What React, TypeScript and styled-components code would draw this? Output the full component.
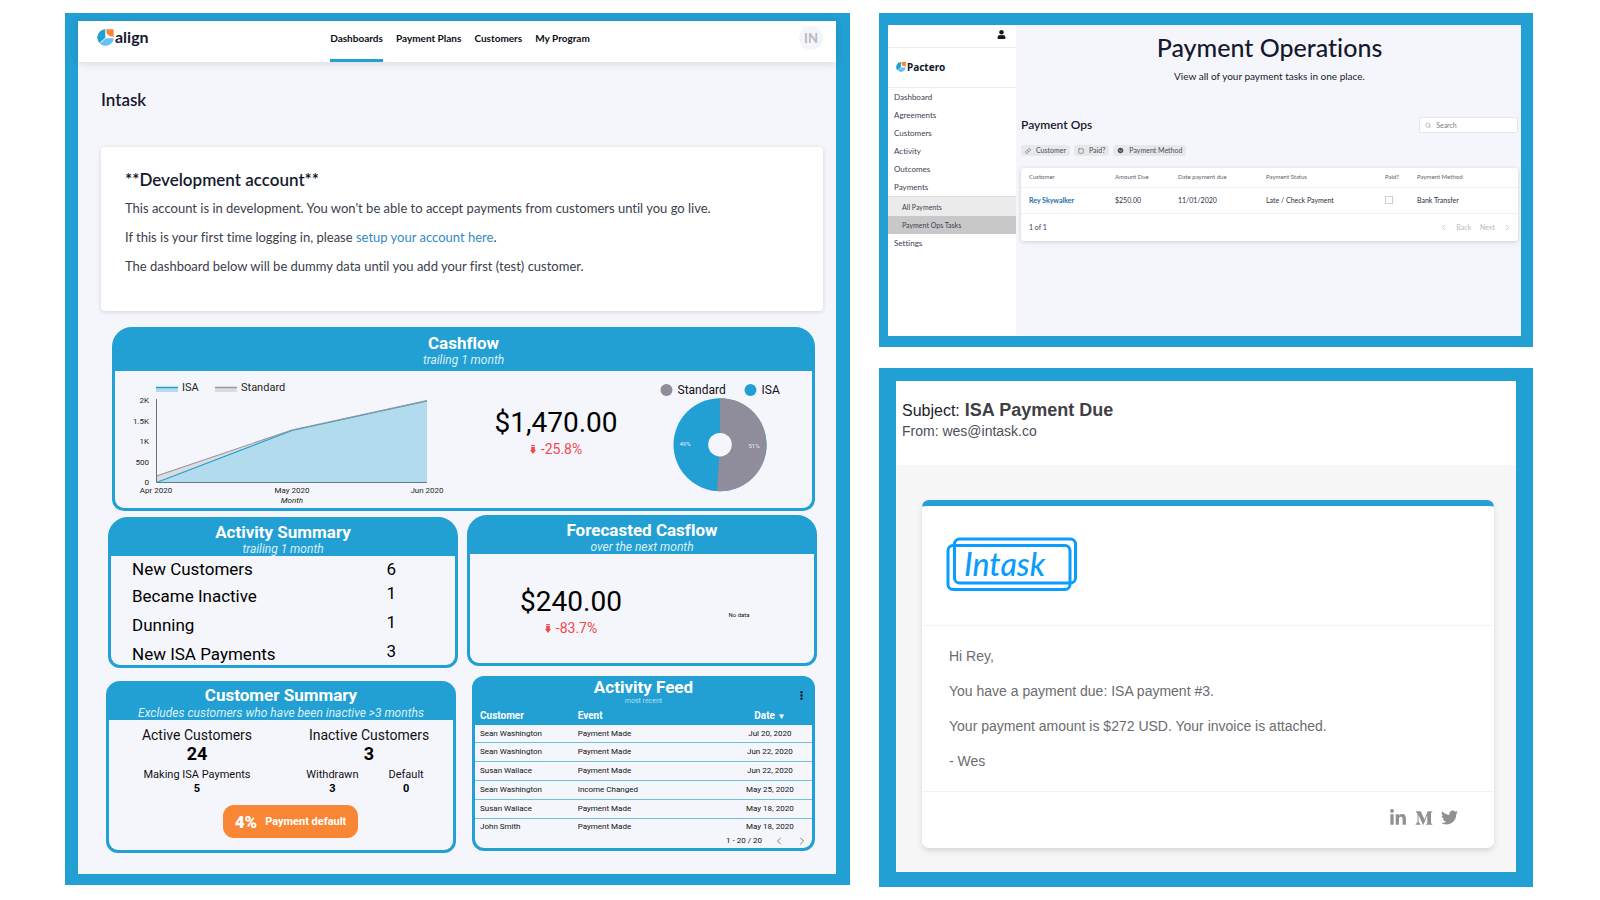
import React from 'react';
import styled, { createGlobalStyle, css } from 'styled-components';
import { FaLinkedinIn, FaMediumM, FaTwitter, FaUser } from 'react-icons/fa';
import { FiChevronLeft, FiChevronRight, FiLink, FiSearch, FiSquare } from 'react-icons/fi';
import { IoIosArrowDropdownCircle } from 'react-icons/io';

const blue = '#229fd3';
const ink = '#15192d';
const mist = '#f5f6fb';
const lato = '"Lato", "Liberation Sans", sans-serif';
const roboto = '"Roboto", "Liberation Sans", sans-serif';
const arial = '"Liberation Sans", Arial, sans-serif';

const GlobalStyle = createGlobalStyle`
  *, *::before, *::after { box-sizing: border-box; }
  body { margin: 0; background: #fff; color: ${ink}; font-family: ${lato}; font-variant-ligatures: none; }
  h1, h2, h3, p, ul, dl, dt, dd { margin: 0; padding: 0; }
  ul { list-style: none; }
  a { color: inherit; text-decoration: none; }
  button { margin: 0; padding: 0; border: 0; background: none; color: inherit; font: inherit; cursor: pointer; }
  svg { display: block; }
`;

const Page = styled.div`
  display: grid;
  grid-template-columns: 785fr 654fr;
  gap: 29px;
  align-items: start;
  padding: 13px 67px 13px 65px;
`;

const SideStack = styled.div`
  display: flex;
  flex-direction: column;
  gap: 21px;
`;

const Frame = styled.section<{ $edges: string }>`
  border: 0 solid ${blue};
  border-width: ${(p) => p.$edges};
`;

/* ---------- program dashboard ---------- */

const DashFrame = styled(Frame)`
  background: ${mist};
`;

const TopBar = styled.header`
  display: grid;
  grid-template-columns: 1fr auto 1fr;
  align-items: stretch;
  height: 41px;
  padding: 0 13px 0 19px;
  background: #fff;
  box-shadow: 0 1px 8px rgba(30, 35, 60, 0.14);
`;

const Brand = styled.a`
  display: flex;
  align-items: center;
  gap: 1px;
  padding-bottom: 9px;
  font-size: 16px;
  line-height: 20px;
  font-weight: 700;
`;

const Nav = styled.nav`
  display: flex;
  gap: 13px;
`;

const NavLink = styled.a<{ $active?: boolean }>`
  padding-top: 10px;
  border-bottom: 3px solid ${(p) => (p.$active ? blue : 'transparent')};
  color: #0c0d14;
  font-size: 10px;
  line-height: 14px;
  font-weight: 700;
`;

const Avatar = styled.button`
  justify-self: end;
  width: 24px;
  height: 24px;
  margin-top: 5px;
  border-radius: 50%;
  background: #f4f5fa;
  color: #b9babd;
  font-size: 13px;
  line-height: 24px;
  font-weight: 700;
  text-align: center;
`;

const Intro = styled.div`
  padding: 26px 13px 0 23px;
`;

const PageName = styled.h1`
  margin-bottom: 35px;
  font-size: 17px;
  line-height: 24px;
  font-weight: 600;
`;

const Notice = styled.div`
  padding: 21px 24px 35px;
  border-radius: 4px;
  background: #fff;
  box-shadow: 0 1px 4px rgba(30, 35, 60, 0.16);
`;

const NoticeTitle = styled.h2`
  margin-bottom: 6px;
  font-size: 17px;
  line-height: 24px;
  font-weight: 600;
`;

const NoticeText = styled.p`
  color: #3b3e4d;
  font-size: 13px;
  line-height: 20px;
  & + & { margin-top: 9px; }
  a { color: #3489c2; }
`;

const WidgetRow = styled.div<{ $cols: string; $gap: number; $pad: string }>`
  display: grid;
  grid-template-columns: ${(p) => p.$cols};
  gap: ${(p) => p.$gap}px;
  padding: ${(p) => p.$pad};
`;

/* The blue ground runs under the rounded border; each body paints its own light surface. */
const Widget = styled.article<{ $corner?: number; $low?: boolean }>`
  align-self: ${(p) => (p.$low ? 'end' : 'start')};
  overflow: hidden;
  border: 3px solid ${blue};
  border-radius: ${(p) => p.$corner ?? 20}px ${(p) => p.$corner ?? 20}px 12px 12px;
  background: ${blue};
  font-family: ${roboto};
  color: #101114;
`;

const WidgetHead = styled.header<{ $tall?: boolean; $tight?: boolean }>`
  display: flex;
  flex-direction: column;
  gap: ${(p) => (p.$tight ? 2 : 1)}px;
  padding: ${(p) => (p.$tall ? '3px 0 4px' : p.$tight ? '1px 0 0' : '2px 0 0')};
  color: #fff;
  text-align: center;
`;

const WidgetTitle = styled.h3`
  font-size: 17px;
  line-height: 20px;
  font-weight: 700;
`;

const WidgetNote = styled.p`
  color: #dcf0f9;
  font-size: 12px;
  line-height: 13px;
  font-style: italic;
`;

const CashBody = styled.div`
  display: grid;
  grid-template-columns: 345fr 192fr 160fr;
  height: 137px;
  background: ${mist};
`;

const Stat = styled.div<{ $top: number }>`
  display: flex;
  flex-direction: column;
  align-items: center;
  gap: 1px;
  padding-top: ${(p) => p.$top}px;
`;

const StatValue = styled.strong`
  color: #000;
  font-size: 28px;
  line-height: 32px;
  font-weight: 400;
`;

const StatDelta = styled.span`
  display: flex;
  align-items: center;
  gap: 5px;
  color: #f2484b;
  font-size: 14px;
  line-height: 18px;
`;

const ForecastBody = styled.div`
  display: grid;
  grid-template-columns: 202fr 134fr;
  height: 109px;
  padding-right: 8px;
  background: ${mist};
`;

const NoData = styled.p`
  padding-top: 56px;
  font-size: 6px;
  line-height: 10px;
  text-align: center;
`;

const SummaryList = styled.dl`
  height: 109px;
  padding: 0 59px 0 21px;
  background: ${mist};
  color: #000;
  font-size: 17px;
  line-height: 20px;
`;

const SummaryItem = styled.div`
  display: flex;
  justify-content: space-between;
  height: 29px;
  dt { padding-top: 4px; }
  dd { padding-top: 1px; }
  &:first-child { height: 26px; }
  &:first-child dt, &:first-child dd { padding-top: 3px; }
  &:last-child { height: 24px; }
`;

const CustomerBody = styled.div`
  padding: 6px 0 12px;
  background: ${mist};
`;

const CountGrid = styled.div`
  display: grid;
  grid-template-columns: 176fr 168fr;
`;

const CountGroup = styled.div`
  display: flex;
  flex-direction: column;
  align-items: center;
  gap: 4px;
`;

const Counts = styled.div`
  display: flex;
  gap: 30px;
  padding-right: 8px;
`;

const Count = styled.dl<{ $big?: boolean }>`
  text-align: center;
  dt {
    font-size: ${(p) => (p.$big ? 14 : 11)}px;
    line-height: ${(p) => (p.$big ? 18 : 14)}px;
  }
  dd {
    color: #000;
    font-size: ${(p) => (p.$big ? 18 : 11)}px;
    line-height: ${(p) => (p.$big ? 20 : 14)}px;
    font-weight: 700;
  }
`;

const DefaultRate = styled.p`
  display: flex;
  align-items: center;
  justify-content: center;
  gap: 8px;
  width: 135px;
  height: 33px;
  margin: 9px 0 0 114px;
  border-radius: 11px;
  background: #f98634;
  color: #fff;
  font-size: 11px;
  font-weight: 700;
  strong { font-size: 17px; }
`;

const FeedHead = styled.header`
  display: grid;
  grid-template-columns: 1fr auto 1fr;
  align-items: start;
  height: 28px;
  color: #fff;
  text-align: center;
`;

const FeedTitle = styled(WidgetTitle)`
  grid-column: 2;
  line-height: 16px;
`;

const FeedNote = styled.p`
  grid-column: 2;
  color: #b5dff1;
  font-size: 7px;
  line-height: 10px;
`;

const MenuButton = styled.button`
  grid-column: 3;
  grid-row: 1 / span 2;
  justify-self: end;
  padding: 12px 9px 0 0;
  color: #0c1b3a;
`;

const FeedTable = styled.table`
  width: 100%;
  height: 129px;
  border-collapse: collapse;
  table-layout: fixed;
  font-size: 8px;
  line-height: 10px;
  th {
    height: 18px;
    padding: 0 5px;
    color: #fff;
    font-size: 10px;
    font-weight: 700;
    text-align: left;
  }
  td { padding: 0 5px; border-bottom: 1px solid #6fbfe1; background: ${mist}; }
  tr:last-child td { border-bottom: 0; }
  th:last-child, td:last-child { text-align: center; }
`;

const SortMark = styled.span`
  font-size: 8px;
`;

const Pager = styled.div`
  display: flex;
  justify-content: flex-end;
  align-items: center;
  height: 12px;
  padding: 0 4px 3px 0;
  gap: 11px;
  background: ${mist};
  font-size: 8px;
  line-height: 8px;
  button { color: #7e8084; }
`;

/* Keeps two pixels of room under the right-hand widget so its neighbour hangs lower. */
const WidgetSpacer = styled.div`
  min-width: 0;
  padding-bottom: 2px;
`;

/* ---------- payment operations ---------- */

const OpsFrame = styled(Frame)`
  display: grid;
  grid-template-columns: 128fr 505fr;
  background: ${mist};
`;

const Sidebar = styled.aside`
  background: #fff;
  color: #3d4050;
`;

const UserBar = styled.div`
  display: flex;
  justify-content: flex-end;
  height: 23px;
  padding: 5px 10px 0 0;
  border-bottom: 1px solid #ececef;
  color: #17181c;
`;

const PacteroBrand = styled.a`
  display: flex;
  align-items: center;
  gap: 1px;
  height: 40px;
  padding: 0 0 2px 8px;
  border-bottom: 1px solid #ececef;
  color: ${ink};
  font: 700 10px/14px "Noto Sans", "Open Sans", sans-serif;
`;

const menuItem = css`
  display: block;
  height: 18px;
  padding-left: 6px;
  font-size: 8px;
  line-height: 18px;
`;

const MenuLink = styled.a`
  ${menuItem}
`;

const SubMenu = styled.ul`
  padding-top: 1px;
  border-top: 1px solid #dfe0e2;
  background: #ebebec;
`;

const SubLink = styled.a<{ $current?: boolean }>`
  ${menuItem}
  padding-left: 14px;
  font-size: 7px;
  background: ${(p) => (p.$current ? '#c8c8c9' : 'transparent')};
`;

const OpsMain = styled.main`
  padding: 6px 3px 95px 5px;
`;

const OpsTitle = styled.h1`
  font-size: 25px;
  line-height: 32px;
  font-weight: 500;
  text-align: center;
`;

const OpsLead = styled.p`
  margin: 6px 0 34px;
  font-size: 10px;
  line-height: 14px;
  text-align: center;
`;

const Toolbar = styled.div`
  display: flex;
  align-items: center;
  justify-content: space-between;
`;

const OpsHeading = styled.h2`
  font-size: 12px;
  line-height: 16px;
  font-weight: 600;
`;

const SearchBox = styled.label`
  display: flex;
  align-items: center;
  gap: 5px;
  width: 99px;
  height: 16px;
  padding-left: 5px;
  border: 1px solid #e6e7eb;
  border-radius: 2px;
  background: #fff;
  color: #85878f;
  input {
    width: 100%;
    min-width: 0;
    padding: 0;
    border: 0;
    outline: 0;
    background: transparent;
    color: inherit;
    font: 7px/10px ${lato};
  }
  input::placeholder { color: #7b7d86; opacity: 1; }
`;

const Filters = styled.div`
  display: flex;
  gap: 4px;
  margin: 12px 0;
`;

const Chip = styled.button`
  display: flex;
  align-items: center;
  gap: 5px;
  height: 11px;
  padding: 0 4px;
  border-radius: 3px;
  background: #e7e8ea;
  color: #4b4d57;
  font-size: 7px;
  line-height: 11px;
`;

const TableCard = styled.div`
  border-radius: 3px;
  background: #fff;
  box-shadow: 0 1px 4px rgba(30, 35, 60, 0.18);
`;

const OpsTable = styled.table`
  width: 100%;
  border-collapse: collapse;
  table-layout: fixed;
  line-height: 10px;
  th, td { padding: 0 0 1px 8px; text-align: left; border-bottom: 1px solid #eeeff3; white-space: nowrap; }
  th { height: 19px; color: #5b5e6a; font-size: 6px; font-weight: 400; }
  td { height: 26px; color: #2b2e3c; font-size: 7px; }
  a { color: #1c6fae; font-weight: 700; }
  input {
    display: block;
    appearance: none;
    width: 8px;
    height: 8px;
    margin: 0;
    border: 1px solid #cccdd2;
    background: #fff;
  }
`;

const TableFoot = styled.div`
  display: flex;
  align-items: center;
  gap: 9px;
  height: 27px;
  padding: 0 6px 0 8px;
  color: #b9bac0;
  font-size: 7px;
  span { margin-right: auto; color: #3d4050; }
  button { display: flex; align-items: center; gap: 8px; }
`;

/* ---------- e-mail ---------- */

const MailFrame = styled(Frame)`
  background: #fff;
  font-family: ${arial};
`;

const MailHead = styled.header`
  height: 84px;
  padding: 18px 6px 0;
  color: #222327;
  p { color: #4d5058; font-size: 14px; line-height: 18px; }
`;

const Subject = styled.h2`
  display: flex;
  align-items: baseline;
  gap: 5px;
  font-size: 16px;
  line-height: 22px;
  font-weight: 400;
  strong { color: #3f4044; font-size: 18px; }
`;

const MailBody = styled.div`
  padding: 35px 22px 24px 26px;
  background: #f7f7f7;
`;

const MailCard = styled.article`
  border-top: 6px solid ${blue};
  border-radius: 7px;
  background: #fff;
  box-shadow: 0 3px 6px rgba(0, 0, 0, 0.13);
`;

const MailLogo = styled.div`
  height: 120px;
  padding: 31px 24px 0;
  border-bottom: 1px solid #f3f3f4;
`;

const MailText = styled.div`
  padding: 21px 27px;
  border-bottom: 1px solid #f3f3f4;
  color: #6b6c6f;
  font-size: 14px;
  line-height: 18px;
  p + p { margin-top: 17px; }
`;

const MailFoot = styled.footer`
  display: flex;
  align-items: center;
  justify-content: flex-end;
  gap: 8px;
  height: 56px;
  padding: 0 36px 4px 0;
  color: #8e9092;
`;

/* ---------- drawings ---------- */

function Mark({ size }: { size: number }) {
  return (
    <svg width={size} height={size} viewBox="0 0 17 17" aria-hidden="true">
      <path d="M8.3 .2A8.4 8.4 0 0 0 2.3 13.9L8.3 8.8Z" fill="#1f9fd2" />
      <path d="M9.2 .2H16.7V7.8Q12.5 7.6 10.7 5.8Q9.3 4 9.2 .2Z" fill="#f98634" />
      <path d="M2.9 14.5L9 9.3H16.7A8.2 8.2 0 0 1 2.9 14.5Z" fill="#66bff7" />
    </svg>
  );
}

function DownArrow() {
  return (
    <svg width="6" height="9" viewBox="0 0 6 9" aria-hidden="true">
      <path d="M1.2 0H4.8V1H1.2ZM1.2 1.7H4.8V5H6L3 9L0 5H1.2Z" fill="#f2484b" />
    </svg>
  );
}

function CashChart() {
  return (
    <svg width="345" height="137" viewBox="0 0 345 137" fontFamily="Roboto, sans-serif" fill="#1d1e22">
      <rect x="41" y="16" width="22" height="5" fill="#b2dbee" />
      <path d="M41 16.5H63" stroke={blue} strokeWidth="1.4" />
      <text x="67" y="20" fontSize="11">ISA</text>
      <rect x="100" y="16" width="22" height="5" fill="#dcdcde" />
      <path d="M100 16.5H122" stroke="#9a9a9e" strokeWidth="1.4" />
      <text x="126" y="20" fontSize="11">Standard</text>
      <path d="M41.5 105L177 59V59.5L41.5 111.5Z" fill="#dcdcde" />
      <path d="M41.5 111.5L177 59.5L312 30V111.5Z" fill="#b2dbee" />
      <path d="M41.5 111.5L177 59.5L312 30" fill="none" stroke={blue} strokeWidth="1.2" />
      <path d="M41.5 105L177 59L312 29.6" fill="none" stroke="#94949e" strokeWidth="1.1" />
      <path d="M41.5 28V111.5" stroke="#6d6e73" />
      <path d="M41.5 111.5H312" stroke="#5e7f92" />
      <g fontSize="8" textAnchor="end">
        <text x="34" y="32">2K</text>
        <text x="34" y="53">1.5K</text>
        <text x="34" y="73">1K</text>
        <text x="34" y="94">500</text>
        <text x="34" y="114">0</text>
      </g>
      <g fontSize="8" textAnchor="middle">
        <text x="41" y="122">Apr 2020</text>
        <text x="177" y="122">May 2020</text>
        <text x="312" y="122">Jun 2020</text>
        <text x="177" y="132" fontStyle="italic">Month</text>
      </g>
    </svg>
  );
}

function SharePie() {
  return (
    <svg width="160" height="137" viewBox="0 0 160 137" fontFamily="Roboto, sans-serif" fontSize="12" fill="#101114">
      <circle cx="14.5" cy="19" r="6" fill="#8f8c9b" />
      <text x="25.5" y="23">Standard</text>
      <circle cx="98.5" cy="19" r="6" fill={blue} />
      <text x="109.5" y="23">ISA</text>
      <circle cx="68" cy="73.7" r="46.5" fill={blue} />
      <path d="M68 27.2A46.5 46.5 0 1 1 65.1 120.1L68 73.7Z" fill="#8f8c9b" />
      <circle cx="68" cy="73.7" r="11.8" fill={mist} />
      <g fontSize="6" fill="#e6edf3" textAnchor="middle">
        <text x="33" y="75">49%</text>
        <text x="102" y="77">51%</text>
      </g>
    </svg>
  );
}

function IntaskLogo() {
  return (
    <svg width="131" height="55" viewBox="0 0 131 55" role="img" aria-label="Intask">
      <g fill="none" stroke="#0a9cff" strokeWidth="3">
        <rect x="2" y="8.5" width="122" height="44" rx="5" />
        <rect x="8.5" y="2" width="121" height="44" rx="5" />
      </g>
      <text x="18" y="39" fill="#0a9cff" fontFamily="Lato, sans-serif" fontSize="32" fontStyle="italic" fontWeight="500">Intask</text>
    </svg>
  );
}

/* ---------- content ---------- */

const feed = [
  ['Sean Washington', 'Payment Made', 'Jul 20, 2020'],
  ['Sean Washington', 'Payment Made', 'Jun 22, 2020'],
  ['Susan Wallace', 'Payment Made', 'Jun 22, 2020'],
  ['Sean Washington', 'Income Changed', 'May 25, 2020'],
  ['Susan Wallace', 'Payment Made', 'May 18, 2020'],
  ['John Smith', 'Payment Made', 'May 18, 2020'],
];

const activity = [
  ['New Customers', '6'],
  ['Became Inactive', '1'],
  ['Dunning', '1'],
  ['New ISA Payments', '3'],
];

function Dashboard() {
  return (
    <DashFrame $edges="8px 14px 11px 13px">
      <TopBar>
        <Brand href="#"><Mark size={17} />align</Brand>
        <Nav>
          <NavLink href="#" $active>Dashboards</NavLink>
          <NavLink href="#">Payment Plans</NavLink>
          <NavLink href="#">Customers</NavLink>
          <NavLink href="#">My Program</NavLink>
        </Nav>
        <Avatar>IN</Avatar>
      </TopBar>
      <Intro>
        <PageName>Intask</PageName>
        <Notice>
          <NoticeTitle>**Development account**</NoticeTitle>
          <NoticeText>This account is in development. You won't be able to accept payments from customers until you go live.</NoticeText>
          <NoticeText>If this is your first time logging in, please <a href="#">setup your account here</a>.</NoticeText>
          <NoticeText>The dashboard below will be dummy data until you add your first (test) customer.</NoticeText>
        </Notice>
      </Intro>

      <WidgetRow $cols="1fr" $gap={0} $pad="16px 21px 4px 34px">
        <Widget>
          <WidgetHead $tall>
            <WidgetTitle>Cashflow</WidgetTitle>
            <WidgetNote>trailing 1 month</WidgetNote>
          </WidgetHead>
          <CashBody>
            <CashChart />
            <Stat $top={36}>
              <StatValue>$1,470.00</StatValue>
              <StatDelta><DownArrow />-25.8%</StatDelta>
            </Stat>
            <SharePie />
          </CashBody>
        </Widget>
      </WidgetRow>

      <WidgetRow $cols="1fr 1fr" $gap={9} $pad="0 19px 8px 30px">
        <Widget $low>
          <WidgetHead>
            <WidgetTitle>Activity Summary</WidgetTitle>
            <WidgetNote>trailing 1 month</WidgetNote>
          </WidgetHead>
          <SummaryList>
            {activity.map(([name, count]) => (
              <SummaryItem key={name}><dt>{name}</dt><dd>{count}</dd></SummaryItem>
            ))}
          </SummaryList>
        </Widget>
        <WidgetSpacer>
          <Widget>
            <WidgetHead>
              <WidgetTitle>Forecasted Casflow</WidgetTitle>
              <WidgetNote>over the next month</WidgetNote>
            </WidgetHead>
            <ForecastBody>
              <Stat $top={32}>
                <StatValue>$240.00</StatValue>
                <StatDelta><DownArrow />-83.7%</StatDelta>
              </Stat>
              <NoData>No data</NoData>
            </ForecastBody>
          </Widget>
        </WidgetSpacer>
      </WidgetRow>

      <WidgetRow $cols="350fr 343fr" $gap={16} $pad="0 21px 21px 28px">
        <Widget $low $corner={14}>
          <WidgetHead $tight>
            <WidgetTitle>Customer Summary</WidgetTitle>
            <WidgetNote>Excludes customers who have been inactive &gt;3 months</WidgetNote>
          </WidgetHead>
          <CustomerBody>
            <CountGrid>
              <CountGroup>
                <Count $big><dt>Active Customers</dt><dd>24</dd></Count>
                <Count><dt>Making ISA Payments</dt><dd>5</dd></Count>
              </CountGroup>
              <CountGroup>
                <Count $big><dt>Inactive Customers</dt><dd>3</dd></Count>
                <Counts>
                  <Count><dt>Withdrawn</dt><dd>3</dd></Count>
                  <Count><dt>Default</dt><dd>0</dd></Count>
                </Counts>
              </CountGroup>
            </CountGrid>
            <DefaultRate><strong>4%</strong>Payment default</DefaultRate>
          </CustomerBody>
        </Widget>
        <WidgetSpacer>
          <Widget $corner={12}>
            <FeedHead>
              <FeedTitle>Activity Feed</FeedTitle>
              <FeedNote>most recent</FeedNote>
              <MenuButton aria-label="Feed menu">
                <svg width="3" height="9" viewBox="0 0 3 9" fill="currentColor">
                  <circle cx="1.5" cy="1.3" r="1.2" /><circle cx="1.5" cy="4.5" r="1.2" /><circle cx="1.5" cy="7.7" r="1.2" />
                </svg>
              </MenuButton>
            </FeedHead>
            <FeedTable>
              <colgroup><col width="29%" /><col width="46%" /><col width="25%" /></colgroup>
              <thead><tr><th>Customer</th><th>Event</th><th>Date <SortMark>▼</SortMark></th></tr></thead>
              <tbody>
                {feed.map(([who, what, when], i) => (
                  <tr key={i}><td>{who}</td><td>{what}</td><td>{when}</td></tr>
                ))}
              </tbody>
            </FeedTable>
            <Pager>
              1 - 20 / 20
              <button aria-label="Previous"><FiChevronLeft size={12} /></button>
              <button aria-label="Next"><FiChevronRight size={12} /></button>
            </Pager>
          </Widget>
        </WidgetSpacer>
      </WidgetRow>
    </DashFrame>
  );
}

function Operations() {
  return (
    <OpsFrame $edges="12px 12px 11px 9px">
      <Sidebar>
        <UserBar><FaUser size={9} /></UserBar>
        <PacteroBrand href="#"><Mark size={10} />Pactero</PacteroBrand>
        <nav>
          {['Dashboard', 'Agreements', 'Customers', 'Activity', 'Outcomes', 'Payments'].map((name) => (
            <MenuLink key={name} href="#">{name}</MenuLink>
          ))}
          <SubMenu>
            <li><SubLink href="#">All Payments</SubLink></li>
            <li><SubLink href="#" $current>Payment Ops Tasks</SubLink></li>
          </SubMenu>
          <MenuLink href="#">Settings</MenuLink>
        </nav>
      </Sidebar>
      <OpsMain>
        <OpsTitle>Payment Operations</OpsTitle>
        <OpsLead>View all of your payment tasks in one place.</OpsLead>
        <Toolbar>
          <OpsHeading>Payment Ops</OpsHeading>
          <SearchBox><FiSearch size={7} /><input type="text" placeholder="Search" aria-label="Search" /></SearchBox>
        </Toolbar>
        <Filters>
          <Chip><FiLink size={6} />Customer</Chip>
          <Chip><FiSquare size={6} />Paid?</Chip>
          <Chip><IoIosArrowDropdownCircle size={7} />Payment Method</Chip>
        </Filters>
        <TableCard>
          <OpsTable>
            <colgroup>
              <col width="86" /><col width="63" /><col width="88" /><col width="119" /><col width="32" /><col width="109" />
            </colgroup>
            <thead>
              <tr><th>Customer</th><th>Amount Due</th><th>Date payment due</th><th>Payment Status</th><th>Paid?</th><th>Payment Method</th></tr>
            </thead>
            <tbody>
              <tr>
                <td><a href="#">Rey Skywalker</a></td>
                <td>$250.00</td>
                <td>11/01/2020</td>
                <td>Late / Check Payment</td>
                <td><input type="checkbox" aria-label="Paid?" /></td>
                <td>Bank Transfer</td>
              </tr>
            </tbody>
          </OpsTable>
          <TableFoot>
            <span>1 of 1</span>
            <button><FiChevronLeft size={9} />Back</button>
            <button>Next<FiChevronRight size={9} /></button>
          </TableFoot>
        </TableCard>
      </OpsMain>
    </OpsFrame>
  );
}

function Mail() {
  return (
    <MailFrame $edges="13px 17px 15px 17px">
      <MailHead>
        <Subject>Subject: <strong>ISA Payment Due</strong></Subject>
        <p>From: wes@intask.co</p>
      </MailHead>
      <MailBody>
        <MailCard>
          <MailLogo><IntaskLogo /></MailLogo>
          <MailText>
            <p>Hi Rey,</p>
            <p>You have a payment due: ISA payment #3.</p>
            <p>Your payment amount is $272 USD. Your invoice is attached.</p>
            <p>- Wes</p>
          </MailText>
          <MailFoot>
            <a href="#" aria-label="LinkedIn"><FaLinkedinIn size={18} /></a>
            <a href="#" aria-label="Medium"><FaMediumM size={18} /></a>
            <a href="#" aria-label="Twitter"><FaTwitter size={17} /></a>
          </MailFoot>
        </MailCard>
      </MailBody>
    </MailFrame>
  );
}

export default function App() {
  return (
    <>
      <GlobalStyle />
      <Page>
        <Dashboard />
        <SideStack>
          <Operations />
          <Mail />
        </SideStack>
      </Page>
    </>
  );
}
